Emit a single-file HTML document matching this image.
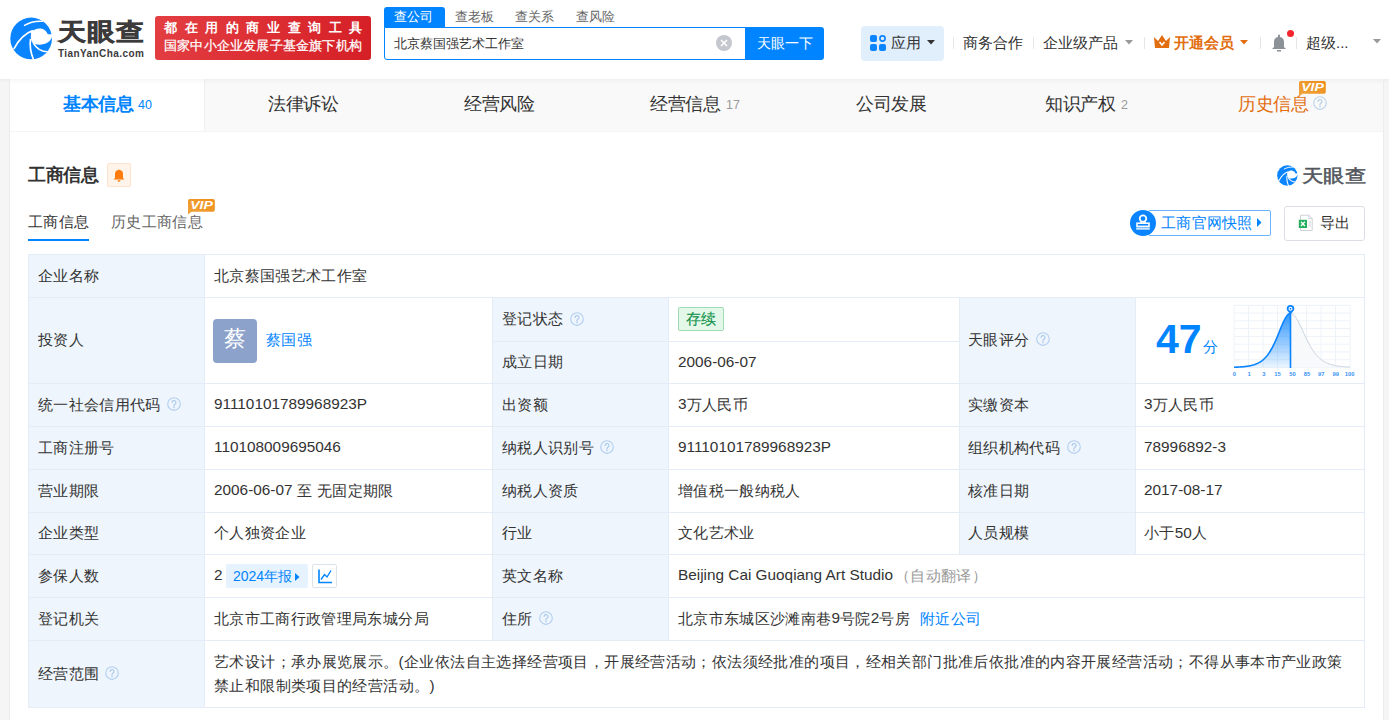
<!DOCTYPE html>
<html><head><meta charset="utf-8">
<style>
*{margin:0;padding:0;box-sizing:border-box}
:root{--lbg:#eef5fc;--bc:#e4edf7}
html,body{width:1389px;height:720px;overflow:hidden;background:#f5f5f5;font-family:"Liberation Sans",sans-serif;color:#333}
.a{position:absolute;white-space:nowrap}
.t{position:absolute;white-space:nowrap;line-height:1}
#hdr{position:absolute;left:0;top:0;width:1389px;height:79px;background:#fff;box-shadow:0 1px 4px rgba(0,0,0,.06)}
#panel{position:absolute;left:10px;top:79px;width:1373px;height:641px;background:#fff}
#nav{position:absolute;left:10px;top:79px;width:1373px;height:53px;background:#f9f9f9}
.nt{position:absolute;top:94px;white-space:nowrap;font-size:18px;letter-spacing:-0.4px;line-height:20px;color:#333}
.ns{position:absolute;top:99px;white-space:nowrap;font-size:12.5px;line-height:12px;color:#999}
.tab{position:absolute;top:0;height:53px;width:196px;font-size:18px;color:#333;text-align:center;line-height:53px}
.tab sup{font-size:13px;color:#999;vertical-align:baseline;margin-left:5px}
.sep{position:absolute;top:37px;width:1px;height:12px;background:#e6e6e6}
.q{position:absolute;width:14px;height:14px;border:1px solid #b8cfe6;border-radius:50%;color:#a8c2dc;font-size:10px;line-height:12px;text-align:center}
.hl{position:absolute;height:1px;background:#e4edf7}
.vl{position:absolute;width:1px;background:#e4edf7}
.lab{position:absolute;background:#eef5fc}
.tx{position:absolute;white-space:nowrap;font-size:15.35px;letter-spacing:0.35px;line-height:20px;color:#333}
.tx i{font-style:normal;letter-spacing:0;position:relative;top:-0.5px}
</style></head><body>
<div id="hdr">
  <!-- logo -->
  <svg class="a" style="left:8px;top:15px" width="48" height="46" viewBox="0 0 751 720">
    <circle cx="362" cy="367" r="326" fill="#0a84ff"/>
    <path d="M362 262 C440 195 570 180 622 300 L720 300 L720 350 L690 338 C660 440 560 480 425 458 C375 445 345 395 362 262 Z" fill="#fff"/>
    <path d="M90 535 C150 420 250 290 390 245" stroke="#fff" stroke-width="26" fill="none"/>
    <path d="M352 375 C335 500 360 610 402 705" stroke="#fff" stroke-width="26" fill="none"/>
    <path d="M395 440 C450 530 540 575 620 575" stroke="#fff" stroke-width="26" fill="none"/>
    <path d="M250 165 C330 120 450 90 548 100" stroke="#fff" stroke-width="22" fill="none"/>
  </svg>
  <div class="t" style="left:58px;top:16px;font-size:28px;font-weight:bold;color:#3c3a3b;letter-spacing:1px;-webkit-text-stroke:0.7px #3c3a3b;transform:scaleY(0.86);transform-origin:0 100%">天眼查</div>
  <div class="t" style="left:58px;top:48.5px;font-size:10px;font-weight:bold;color:#3c3a3b;letter-spacing:0.42px">TianYanCha.com</div>
  <!-- red banner -->
  <div class="a" style="left:155px;top:16px;width:216px;height:44px;border-radius:3px;background:linear-gradient(100deg,#e33e42,#d51f26)"></div>
  <div class="t" style="left:164px;top:21px;font-size:13px;font-weight:bold;color:#fff;letter-spacing:7.6px">都在用的商业查询工具</div>
  <div class="t" style="left:164px;top:39px;font-size:13px;color:#fff;letter-spacing:0.2px;-webkit-text-stroke:0.25px #fff">国家中小企业发展子基金旗下机构</div>
  <!-- search -->
  <div class="a" style="left:384px;top:7px;width:61px;height:20px;background:#0084ff;border-radius:3px 3px 0 0"></div>
  <div class="t" style="left:394px;top:10px;font-size:13px;color:#fff">查公司</div>
  <div class="t" style="left:455px;top:10px;font-size:13px;color:#666">查老板</div>
  <div class="t" style="left:515px;top:10px;font-size:13px;color:#666">查关系</div>
  <div class="t" style="left:576px;top:10px;font-size:13px;color:#666">查风险</div>
  <div class="a" style="left:384px;top:27px;width:362px;height:33px;border:1px solid #0084ff;border-radius:0 0 0 3px;background:#fff"></div>
  <div class="t" style="left:394px;top:37px;font-size:13px;color:#333">北京蔡国强艺术工作室</div>
  <div class="a" style="left:716px;top:35px;width:16px;height:16px;border-radius:50%;background:#c4c8ce"></div>
  <svg class="a" style="left:716px;top:35px" width="16" height="16"><path d="M5 5L11 11M11 5L5 11" stroke="#fff" stroke-width="1.6"/></svg>
  <div class="a" style="left:745px;top:27px;width:79px;height:33px;background:#0084ff;border-radius:0 3px 3px 0"></div>
  <div class="t" style="left:757px;top:36px;font-size:14px;color:#fff">天眼一下</div>
  <!-- right nav -->
  <div class="a" style="left:861px;top:26px;width:83px;height:35px;background:#e1eefc;border-radius:4px"></div>
  <svg class="a" style="left:870px;top:35px" width="16" height="16">
    <rect x="0" y="0" width="7" height="7" rx="2" fill="#0a84ff"/>
    <circle cx="12.5" cy="3.5" r="2.6" fill="none" stroke="#0a84ff" stroke-width="1.6"/>
    <rect x="0" y="9" width="7" height="7" rx="2" fill="#0a84ff"/>
    <rect x="9" y="9" width="7" height="7" rx="2" fill="#0a84ff"/>
  </svg>
  <div class="t" style="left:891px;top:35px;font-size:15px;color:#333">应用</div>
  <svg class="a" style="left:927px;top:40px" width="8" height="5"><path d="M0 0H8L4 4.5Z" fill="#333"/></svg>
  <div class="sep" style="left:953px"></div>
  <div class="t" style="left:963px;top:35px;font-size:15px;color:#333">商务合作</div>
  <div class="sep" style="left:1033px"></div>
  <div class="t" style="left:1043px;top:35px;font-size:15px;color:#333">企业级产品</div>
  <svg class="a" style="left:1125px;top:40px" width="8" height="5"><path d="M0 0H8L4 4.5Z" fill="#999"/></svg>
  <div class="sep" style="left:1144px"></div>
  <svg class="a" style="left:1154px;top:35px" width="16" height="13"><path d="M0 2 L4 6 L8 0 L12 6 L16 2 L15 13 H1 Z" fill="#e26e10"/><path d="M5.5 7 L8 10 L10.5 7" stroke="#fff" stroke-width="1.6" fill="none"/></svg>
  <div class="t" style="left:1174px;top:35px;font-size:15px;color:#e26e10;font-weight:bold">开通会员</div>
  <svg class="a" style="left:1240px;top:40px" width="8" height="5"><path d="M0 0H8L4 4.5Z" fill="#e26e10"/></svg>
  <div class="sep" style="left:1260px"></div>
  <svg class="a" style="left:1271px;top:34px" width="16" height="18"><path d="M8 0.5a1 1 0 0 1 1 1V3a5 5 0 0 1 4 5v5l2 2H1l2-2V8a5 5 0 0 1 4-5V1.5a1 1 0 0 1 1-1Z" fill="#8d9299"/><rect x="6" y="16" width="4" height="1.5" fill="#8d9299"/></svg>
  <div class="a" style="left:1287px;top:30px;width:7px;height:7px;border-radius:50%;background:#f4262d"></div>
  <div class="sep" style="left:1296px"></div>
  <div class="t" style="left:1306px;top:35px;font-size:15px;color:#333">超级...</div>
  <svg class="a" style="left:1373px;top:39px" width="8" height="5"><path d="M0 0H8L4 4.5Z" fill="#999"/></svg>
</div>

<div id="panel"></div>
<div class="a" style="left:9px;top:79px;width:1px;height:641px;background:#ebebeb"></div>
<div class="a" style="left:1383px;top:79px;width:1px;height:641px;background:#ededed"></div>
<div id="nav">
  <div class="a" style="left:0;top:0;width:195px;height:52px;background:#fff;border-right:1px solid #efefef"></div>
  <div class="a" style="left:0;top:52px;width:1373px;height:1px;background:#f4f4f4"></div>
  <div class="a" style="left:0;top:0;width:1373px;height:5px;background:linear-gradient(rgba(0,0,0,.035),rgba(0,0,0,0))"></div>
</div>
<div class="nt" style="left:63px;color:#0084ff;font-weight:bold">基本信息</div>
<div class="ns" style="left:138px;color:#0084ff">40</div>
<div class="nt" style="left:268px">法律诉讼</div>
<div class="nt" style="left:464px">经营风险</div>
<div class="nt" style="left:650px">经营信息</div>
<div class="ns" style="left:726px">17</div>
<div class="nt" style="left:856px">公司发展</div>
<div class="nt" style="left:1045px">知识产权</div>
<div class="ns" style="left:1121px">2</div>
<div class="nt" style="left:1238px;color:#e26e10">历史信息</div>
<svg class="a" style="left:1313px;top:96.3px" width="14" height="14"><circle cx="7" cy="7" r="6.3" fill="none" stroke="#bcd3ea" stroke-width="1.15"/><path d="M5.1 5.5a1.95 1.95 0 1 1 2.8 1.75c-.6.3-.9.65-.9 1.25v.55" fill="none" stroke="#b3cce6" stroke-width="1.15" stroke-linecap="round"/><circle cx="7" cy="10.5" r=".75" fill="#b3cce6"/></svg>
<svg class="a" style="left:1299px;top:81px" width="28" height="16" viewBox="0 0 28 16"><defs><linearGradient id="vg1299" x1="0" y1="1" x2="1" y2="0"><stop offset="0" stop-color="#f0a43c"/><stop offset="1" stop-color="#ee8d18"/></linearGradient></defs><path d="M1.8 0H25a1.8 1.8 0 0 1 1.8 1.8V11a1.8 1.8 0 0 1-1.8 1.8H3.6L0 15.6V1.8A1.8 1.8 0 0 1 1.8 0Z" fill="url(#vg1299)"/><text x="2.2" y="10.2" font-family="Liberation Sans" font-size="11" font-weight="bold" font-style="italic" fill="#fff" textLength="22.6" lengthAdjust="spacingAndGlyphs">VIP</text></svg>



<!-- section header -->
<div class="t" style="left:28px;top:165.5px;font-size:18px;font-weight:bold;letter-spacing:-0.5px;color:#333">工商信息</div>
<div class="a" style="left:107px;top:163px;width:24px;height:24px;background:#fff4ea;border:1px solid #fde3cc;border-radius:2px"></div>
<svg class="a" style="left:112px;top:168px" width="14" height="14"><path d="M7 1.5a1 1 0 0 1 .8.6A4 4 0 0 1 11 6v4l1.5 1.5H1.5L3 10V6a4 4 0 0 1 3.2-3.9A1 1 0 0 1 7 1.5Z" fill="#ff7b0d"/><path d="M5.5 12.3h3a1.5 1.5 0 0 1-3 0Z" fill="#ff7b0d"/></svg>
<!-- small logo right -->
<svg class="a" style="left:1276px;top:163.5px" width="23.5" height="22.5" viewBox="0 0 751 720">
  <circle cx="362" cy="367" r="326" fill="#0a84ff"/>
  <path d="M362 262 C440 195 570 180 622 300 L720 300 L720 350 L690 338 C660 440 560 480 425 458 C375 445 345 395 362 262 Z" fill="#fff"/>
  <path d="M90 535 C150 420 250 290 390 245" stroke="#fff" stroke-width="34" fill="none"/>
  <path d="M352 375 C335 500 360 610 402 705" stroke="#fff" stroke-width="34" fill="none"/>
  <path d="M395 440 C450 530 540 575 620 575" stroke="#fff" stroke-width="34" fill="none"/>
  <path d="M250 165 C330 120 450 90 548 100" stroke="#fff" stroke-width="30" fill="none"/>
</svg>
<div class="t" style="left:1302px;top:163.5px;font-size:21px;font-weight:normal;-webkit-text-stroke:0.6px #53575d;color:#53575d;letter-spacing:0.3px;transform:scaleY(0.84);transform-origin:0 100%">天眼查</div>
<!-- sub tabs -->
<div class="t" style="left:28px;top:214px;font-size:15px;letter-spacing:0.3px;color:#333">工商信息</div>
<div class="a" style="left:28px;top:239px;width:61px;height:2px;background:#0084ff"></div>
<div class="t" style="left:111px;top:214px;font-size:15px;letter-spacing:0.35px;color:#666">历史工商信息</div>
<svg class="a" style="left:188px;top:199px" width="28" height="16" viewBox="0 0 28 16"><defs><linearGradient id="vg188" x1="0" y1="1" x2="1" y2="0"><stop offset="0" stop-color="#f0a43c"/><stop offset="1" stop-color="#ee8d18"/></linearGradient></defs><path d="M1.8 0H25a1.8 1.8 0 0 1 1.8 1.8V11a1.8 1.8 0 0 1-1.8 1.8H3.6L0 15.6V1.8A1.8 1.8 0 0 1 1.8 0Z" fill="url(#vg188)"/><text x="2.2" y="10.2" font-family="Liberation Sans" font-size="11" font-weight="bold" font-style="italic" fill="#fff" textLength="22.6" lengthAdjust="spacingAndGlyphs">VIP</text></svg>
<!-- stamp button -->
<div class="a" style="left:1148px;top:210px;width:123px;height:26px;border:1px solid #6bb4ff;border-radius:2px;background:#fff"></div>
<div class="a" style="left:1130px;top:210px;width:26px;height:26px;border-radius:50%;background:#0a84ff"></div>
<svg class="a" style="left:1130px;top:210px" width="26" height="26"><circle cx="13" cy="8.6" r="3.3" fill="none" stroke="#fff" stroke-width="1.7"/><path d="M11.4 11.6V13.2M14.6 11.6V13.2" stroke="#fff" stroke-width="1.6"/><rect x="7" y="13.2" width="12" height="3.2" fill="none" stroke="#fff" stroke-width="1.6"/><rect x="6.2" y="17.6" width="13.6" height="2.1" fill="#fff" fill-opacity="0.8"/></svg>
<div class="t" style="left:1161px;top:215px;font-size:15px;letter-spacing:0.3px;color:#0084ff">工商官网快照</div>
<svg class="a" style="left:1257px;top:218px" width="5" height="9"><path d="M0 0L4.5 4.5L0 9Z" fill="#0084ff"/></svg>
<!-- export -->
<div class="a" style="left:1284px;top:206px;width:81px;height:35px;border:1px solid #dcdfe6;border-radius:3px;background:#fff"></div>
<svg class="a" style="left:1298px;top:214px" width="17" height="18"><path d="M2.5 1.2h8.3l3.4 3.4v11.9H2.5z" fill="#fff" stroke="#cdd1d8" stroke-width="1"/><path d="M10.8 1.2v3.4h3.4" fill="none" stroke="#cdd1d8" stroke-width="1"/><rect x="0.8" y="5.8" width="8.2" height="8.2" fill="#22ae5c"/><path d="M2.9 7.8l4 4.2M6.9 7.8l-4 4.2" stroke="#fff" stroke-width="1.3"/><path d="M10.6 8h2.4M10.6 10h2.4M10.6 12h2.4" stroke="#d0d3d9" stroke-width="1"/></svg>
<div class="t" style="left:1320px;top:215px;font-size:15px;color:#333">导出</div>
<!--TABLE-->
<div class="a" style="left:28px;top:254px;width:176px;height:453px;background:var(--lbg)"></div>
<div class="a" style="left:492px;top:297px;width:176px;height:343px;background:var(--lbg)"></div>
<div class="a" style="left:959px;top:297px;width:176px;height:257px;background:var(--lbg)"></div>
<div class="a" style="left:28px;top:254px;width:1337px;height:1px;background:var(--bc)"></div>
<div class="a" style="left:28px;top:297px;width:1337px;height:1px;background:var(--bc)"></div>
<div class="a" style="left:28px;top:383px;width:1337px;height:1px;background:var(--bc)"></div>
<div class="a" style="left:28px;top:426px;width:1337px;height:1px;background:var(--bc)"></div>
<div class="a" style="left:28px;top:469px;width:1337px;height:1px;background:var(--bc)"></div>
<div class="a" style="left:28px;top:512px;width:1337px;height:1px;background:var(--bc)"></div>
<div class="a" style="left:28px;top:554px;width:1337px;height:1px;background:var(--bc)"></div>
<div class="a" style="left:28px;top:597px;width:1337px;height:1px;background:var(--bc)"></div>
<div class="a" style="left:28px;top:640px;width:1337px;height:1px;background:var(--bc)"></div>
<div class="a" style="left:28px;top:707px;width:1337px;height:1px;background:var(--bc)"></div>
<div class="a" style="left:492px;top:341px;width:467px;height:1px;background:var(--bc)"></div>
<div class="a" style="left:28px;top:254px;width:1px;height:454px;background:var(--bc)"></div>
<div class="a" style="left:204px;top:254px;width:1px;height:454px;background:var(--bc)"></div>
<div class="a" style="left:492px;top:297px;width:1px;height:343px;background:var(--bc)"></div>
<div class="a" style="left:668px;top:297px;width:1px;height:343px;background:var(--bc)"></div>
<div class="a" style="left:959px;top:297px;width:1px;height:257px;background:var(--bc)"></div>
<div class="a" style="left:1135px;top:297px;width:1px;height:257px;background:var(--bc)"></div>
<div class="a" style="left:1364px;top:254px;width:1px;height:454px;background:var(--bc)"></div>
<div class="tx" style="left:38px;top:265.5px">企业名称</div>
<div class="tx" style="left:214px;top:265.5px">北京蔡国强艺术工作室</div>
<div class="tx" style="left:38px;top:330px">投资人</div>
<div class="tx" style="left:502px;top:309px">登记状态</div>
<svg class="a" style="left:569.6px;top:311.5px" width="14" height="14"><circle cx="7" cy="7" r="6.3" fill="none" stroke="#b3cff0" stroke-width="1.15"/><path d="M5.1 5.5a1.95 1.95 0 1 1 2.8 1.75c-.6.3-.9.65-.9 1.25v.55" fill="none" stroke="#a9c9ec" stroke-width="1.15" stroke-linecap="round"/><circle cx="7" cy="10.5" r=".75" fill="#a9c9ec"/></svg>
<div class="tx" style="left:502px;top:352px">成立日期</div>
<div class="tx" style="left:678px;top:352px"><i>2006-06-07</i></div>
<div class="tx" style="left:968px;top:330px">天眼评分</div>
<svg class="a" style="left:1036px;top:332.2px" width="14" height="14"><circle cx="7" cy="7" r="6.3" fill="none" stroke="#b3cff0" stroke-width="1.15"/><path d="M5.1 5.5a1.95 1.95 0 1 1 2.8 1.75c-.6.3-.9.65-.9 1.25v.55" fill="none" stroke="#a9c9ec" stroke-width="1.15" stroke-linecap="round"/><circle cx="7" cy="10.5" r=".75" fill="#a9c9ec"/></svg>
<div class="tx" style="left:38px;top:394.5px">统一社会信用代码</div>
<svg class="a" style="left:167px;top:397.2px" width="14" height="14"><circle cx="7" cy="7" r="6.3" fill="none" stroke="#b3cff0" stroke-width="1.15"/><path d="M5.1 5.5a1.95 1.95 0 1 1 2.8 1.75c-.6.3-.9.65-.9 1.25v.55" fill="none" stroke="#a9c9ec" stroke-width="1.15" stroke-linecap="round"/><circle cx="7" cy="10.5" r=".75" fill="#a9c9ec"/></svg>
<div class="tx" style="left:214px;top:394.5px"><i>91110101789968923P</i></div>
<div class="tx" style="left:502px;top:394.5px">出资额</div>
<div class="tx" style="left:678px;top:394.5px"><i>3</i>万人民币</div>
<div class="tx" style="left:968px;top:394.5px">实缴资本</div>
<div class="tx" style="left:1144px;top:394.5px"><i>3</i>万人民币</div>
<div class="tx" style="left:38px;top:437.5px">工商注册号</div>
<div class="tx" style="left:214px;top:437.5px"><i>110108009695046</i></div>
<div class="tx" style="left:502px;top:437.5px">纳税人识别号</div>
<svg class="a" style="left:600.4px;top:440.1px" width="14" height="14"><circle cx="7" cy="7" r="6.3" fill="none" stroke="#b3cff0" stroke-width="1.15"/><path d="M5.1 5.5a1.95 1.95 0 1 1 2.8 1.75c-.6.3-.9.65-.9 1.25v.55" fill="none" stroke="#a9c9ec" stroke-width="1.15" stroke-linecap="round"/><circle cx="7" cy="10.5" r=".75" fill="#a9c9ec"/></svg>
<div class="tx" style="left:678px;top:437.5px"><i>91110101789968923P</i></div>
<div class="tx" style="left:968px;top:437.5px">组织机构代码</div>
<svg class="a" style="left:1067px;top:440.2px" width="14" height="14"><circle cx="7" cy="7" r="6.3" fill="none" stroke="#b3cff0" stroke-width="1.15"/><path d="M5.1 5.5a1.95 1.95 0 1 1 2.8 1.75c-.6.3-.9.65-.9 1.25v.55" fill="none" stroke="#a9c9ec" stroke-width="1.15" stroke-linecap="round"/><circle cx="7" cy="10.5" r=".75" fill="#a9c9ec"/></svg>
<div class="tx" style="left:1144px;top:437.5px"><i>78996892-3</i></div>
<div class="tx" style="left:38px;top:480.5px">营业期限</div>
<div class="tx" style="left:214px;top:480.5px"><i>2006-06-07</i> 至 无固定期限</div>
<div class="tx" style="left:502px;top:480.5px">纳税人资质</div>
<div class="tx" style="left:678px;top:480.5px">增值税一般纳税人</div>
<div class="tx" style="left:968px;top:480.5px">核准日期</div>
<div class="tx" style="left:1144px;top:480.5px"><i>2017-08-17</i></div>
<div class="tx" style="left:38px;top:523px">企业类型</div>
<div class="tx" style="left:214px;top:523px">个人独资企业</div>
<div class="tx" style="left:502px;top:523px">行业</div>
<div class="tx" style="left:678px;top:523px">文化艺术业</div>
<div class="tx" style="left:968px;top:523px">人员规模</div>
<div class="tx" style="left:1144px;top:523px">小于<i>50</i>人</div>
<div class="tx" style="left:38px;top:565.5px">参保人数</div>
<div class="tx" style="left:214px;top:565.5px"><i>2</i></div>
<div class="tx" style="left:502px;top:565.5px">英文名称</div>
<div class="tx" style="left:678px;top:565.5px"><i>Beijing Cai Guoqiang Art Studio</i><span style="color:#999;margin-left:2px">（自动翻译）</span></div>
<div class="tx" style="left:38px;top:608.5px">登记机关</div>
<div class="tx" style="left:214px;top:608.5px">北京市工商行政管理局东城分局</div>
<div class="tx" style="left:502px;top:608.5px">住所</div>
<svg class="a" style="left:539px;top:611.2px" width="14" height="14"><circle cx="7" cy="7" r="6.3" fill="none" stroke="#b3cff0" stroke-width="1.15"/><path d="M5.1 5.5a1.95 1.95 0 1 1 2.8 1.75c-.6.3-.9.65-.9 1.25v.55" fill="none" stroke="#a9c9ec" stroke-width="1.15" stroke-linecap="round"/><circle cx="7" cy="10.5" r=".75" fill="#a9c9ec"/></svg>
<div class="tx" style="left:678px;top:608.5px">北京市东城区沙滩南巷<i>9</i>号院<i>2</i>号房<span style="color:#0084ff;margin-left:10px">附近公司</span></div>
<div class="tx" style="left:38px;top:663.5px">经营范围</div>
<svg class="a" style="left:105.1px;top:666.2px" width="14" height="14"><circle cx="7" cy="7" r="6.3" fill="none" stroke="#b3cff0" stroke-width="1.15"/><path d="M5.1 5.5a1.95 1.95 0 1 1 2.8 1.75c-.6.3-.9.65-.9 1.25v.55" fill="none" stroke="#a9c9ec" stroke-width="1.15" stroke-linecap="round"/><circle cx="7" cy="10.5" r=".75" fill="#a9c9ec"/></svg>
<div class="tx" style="left:214px;top:650px;line-height:24px;letter-spacing:0.385px">艺术设计；承办展览展示。(企业依法自主选择经营项目，开展经营活动；依法须经批准的项目，经相关部门批准后依批准的内容开展经营活动；不得从事本市产业政策<br>禁止和限制类项目的经营活动。)</div>
<div class="a" style="left:213px;top:319px;width:44px;height:44px;border-radius:4px;background:#8ca2cb"></div>
<div class="t" style="left:224px;top:328px;font-size:22px;color:#fff">蔡</div>
<div class="tx" style="left:266px;top:330px"><span style="color:#0084ff">蔡国强</span></div>
<div class="a" style="left:678px;top:307px;width:46px;height:24px;border:1px solid #9edbb2;border-radius:2px;background:#e3f8e9"></div>
<div class="tx" style="left:686px;top:309px;font-size:15px;letter-spacing:0;color:#12924a;-webkit-text-stroke:0.15px #12924a">存续</div>
<div class="a" style="left:226px;top:564px;width:82px;height:24px;border-radius:2px;background:#e6f2fe"></div>
<div class="tx" style="left:233px;top:566px;font-size:14px;letter-spacing:0;color:#0084ff"><i style="top:0">2024</i>年报</div>
<svg class="a" style="left:295px;top:573px" width="5" height="8"><path d="M0 0L4.5 4L0 8Z" fill="#0084ff"/></svg>
<div class="a" style="left:312px;top:564px;width:25px;height:24px;border:1px solid #dde3ea;border-radius:2px;background:#fff"></div>
<svg class="a" style="left:312px;top:564px" width="25" height="24"><path d="M7 5.5V18.5H20" fill="none" stroke="#0084ff" stroke-width="1.6"/><path d="M9 15.5L12.5 10.5L15 13L19 6.5" fill="none" stroke="#0084ff" stroke-width="1.4"/></svg>
<div class="t" style="left:1156px;top:319px;font-size:41px;font-weight:bold;color:#0084ff">47</div>
<div class="t" style="left:1203px;top:339px;font-size:15px;color:#0084ff">分</div>
<svg class="a" style="left:1230px;top:300px" width="130" height="80" viewBox="0 0 130 80"><defs><linearGradient id="lg" x1="0" y1="0" x2="0" y2="1"><stop offset="0" stop-color="#0a84ff" stop-opacity="0.85"/><stop offset="1" stop-color="#0a84ff" stop-opacity="0.08"/></linearGradient></defs><g stroke="#edf2f8" stroke-width="1"><line x1="4.10" y1="5.30" x2="4.10" y2="67.50"/><line x1="18.60" y1="5.30" x2="18.60" y2="67.50"/><line x1="33.10" y1="5.30" x2="33.10" y2="67.50"/><line x1="47.60" y1="5.30" x2="47.60" y2="67.50"/><line x1="62.10" y1="5.30" x2="62.10" y2="67.50"/><line x1="76.60" y1="5.30" x2="76.60" y2="67.50"/><line x1="91.10" y1="5.30" x2="91.10" y2="67.50"/><line x1="105.60" y1="5.30" x2="105.60" y2="67.50"/><line x1="120.10" y1="5.30" x2="120.10" y2="67.50"/><line x1="4.10" y1="5.30" x2="120.10" y2="5.30"/><line x1="4.10" y1="13.07" x2="120.10" y2="13.07"/><line x1="4.10" y1="20.85" x2="120.10" y2="20.85"/><line x1="4.10" y1="28.62" x2="120.10" y2="28.62"/><line x1="4.10" y1="36.40" x2="120.10" y2="36.40"/><line x1="4.10" y1="44.18" x2="120.10" y2="44.18"/><line x1="4.10" y1="51.95" x2="120.10" y2="51.95"/><line x1="4.10" y1="59.73" x2="120.10" y2="59.73"/><line x1="4.10" y1="67.50" x2="120.10" y2="67.50"/></g><polygon points="60.50,13.40 61.00,13.44 61.50,13.55 62.00,13.74 62.50,14.00 63.00,14.33 63.50,14.73 64.00,15.20 64.50,15.73 65.00,16.32 65.50,16.98 66.00,17.69 66.50,18.46 67.00,19.27 67.50,20.13 68.00,21.03 68.50,21.96 69.00,22.93 69.50,23.93 70.00,24.95 70.50,26.00 71.00,27.06 71.50,28.14 72.00,29.22 72.50,30.31 73.00,31.41 73.50,32.50 74.00,33.60 74.50,34.68 75.00,35.76 75.50,36.83 76.00,37.89 76.50,38.93 77.00,39.95 77.50,40.96 78.00,41.95 78.50,42.91 79.00,43.86 79.50,44.78 80.00,45.68 80.50,46.55 81.00,47.40 81.50,48.23 82.00,49.03 82.50,49.81 83.00,50.56 83.50,51.29 84.00,51.99 84.50,52.67 85.00,53.32 85.50,53.95 86.00,54.55 86.50,55.14 87.00,55.70 87.50,56.24 88.00,56.75 88.50,57.25 89.00,57.72 89.50,58.18 90.00,58.62 90.50,59.03 91.00,59.44 91.50,59.82 92.00,60.18 92.50,60.53 93.00,60.87 93.50,61.19 94.00,61.49 94.50,61.78 95.00,62.06 95.50,62.33 96.00,62.58 96.50,62.82 97.00,63.05 97.50,63.27 98.00,63.48 98.50,63.68 99.00,63.87 99.50,64.05 100.00,64.22 100.50,64.38 101.00,64.54 101.50,64.69 102.00,64.83 102.50,64.96 103.00,65.09 103.50,65.21 104.00,65.32 104.50,65.43 105.00,65.54 105.50,65.64 106.00,65.73 106.50,65.82 107.00,65.90 107.50,65.98 108.00,66.06 108.50,66.13 109.00,66.20 109.50,66.27 110.00,66.33 110.50,66.39 111.00,66.45 111.50,66.50 112.00,66.55 112.50,66.60 113.00,66.65 113.50,66.69 114.00,66.73 114.50,66.77 115.00,66.81 115.50,66.84 116.00,66.88 116.50,66.91 117.00,66.94 117.50,66.97 118.00,66.99 118.50,67.02 119.00,67.04 119.50,67.07 120.00,67.09 120.00,67.50 60.50,67.50" fill="#f8f9fb"/><polyline points="60.50,13.40 61.00,13.44 61.50,13.55 62.00,13.74 62.50,14.00 63.00,14.33 63.50,14.73 64.00,15.20 64.50,15.73 65.00,16.32 65.50,16.98 66.00,17.69 66.50,18.46 67.00,19.27 67.50,20.13 68.00,21.03 68.50,21.96 69.00,22.93 69.50,23.93 70.00,24.95 70.50,26.00 71.00,27.06 71.50,28.14 72.00,29.22 72.50,30.31 73.00,31.41 73.50,32.50 74.00,33.60 74.50,34.68 75.00,35.76 75.50,36.83 76.00,37.89 76.50,38.93 77.00,39.95 77.50,40.96 78.00,41.95 78.50,42.91 79.00,43.86 79.50,44.78 80.00,45.68 80.50,46.55 81.00,47.40 81.50,48.23 82.00,49.03 82.50,49.81 83.00,50.56 83.50,51.29 84.00,51.99 84.50,52.67 85.00,53.32 85.50,53.95 86.00,54.55 86.50,55.14 87.00,55.70 87.50,56.24 88.00,56.75 88.50,57.25 89.00,57.72 89.50,58.18 90.00,58.62 90.50,59.03 91.00,59.44 91.50,59.82 92.00,60.18 92.50,60.53 93.00,60.87 93.50,61.19 94.00,61.49 94.50,61.78 95.00,62.06 95.50,62.33 96.00,62.58 96.50,62.82 97.00,63.05 97.50,63.27 98.00,63.48 98.50,63.68 99.00,63.87 99.50,64.05 100.00,64.22 100.50,64.38 101.00,64.54 101.50,64.69 102.00,64.83 102.50,64.96 103.00,65.09 103.50,65.21 104.00,65.32 104.50,65.43 105.00,65.54 105.50,65.64 106.00,65.73 106.50,65.82 107.00,65.90 107.50,65.98 108.00,66.06 108.50,66.13 109.00,66.20 109.50,66.27 110.00,66.33 110.50,66.39 111.00,66.45 111.50,66.50 112.00,66.55 112.50,66.60 113.00,66.65 113.50,66.69 114.00,66.73 114.50,66.77 115.00,66.81 115.50,66.84 116.00,66.88 116.50,66.91 117.00,66.94 117.50,66.97 118.00,66.99 118.50,67.02 119.00,67.04 119.50,67.07 120.00,67.09" fill="none" stroke="#c6d2e0" stroke-width="1"/><polygon points="4.00,67.24 4.50,67.23 5.00,67.21 5.50,67.19 6.00,67.17 6.50,67.15 7.00,67.13 7.50,67.11 8.00,67.08 8.50,67.06 9.00,67.03 9.50,67.00 10.00,66.97 10.50,66.94 11.00,66.91 11.50,66.87 12.00,66.83 12.50,66.79 13.00,66.75 13.50,66.70 14.00,66.65 14.50,66.60 15.00,66.55 15.50,66.49 16.00,66.43 16.50,66.36 17.00,66.29 17.50,66.22 18.00,66.14 18.50,66.06 19.00,65.97 19.50,65.88 20.00,65.78 20.50,65.68 21.00,65.57 21.50,65.46 22.00,65.33 22.50,65.20 23.00,65.06 23.50,64.92 24.00,64.77 24.50,64.60 25.00,64.43 25.50,64.25 26.00,64.05 26.50,63.85 27.00,63.63 27.50,63.41 28.00,63.16 28.50,62.91 29.00,62.64 29.50,62.36 30.00,62.06 30.50,61.74 31.00,61.41 31.50,61.06 32.00,60.69 32.50,60.30 33.00,59.89 33.50,59.46 34.00,59.01 34.50,58.53 35.00,58.04 35.50,57.51 36.00,56.96 36.50,56.38 37.00,55.78 37.50,55.15 38.00,54.49 38.50,53.80 39.00,53.08 39.50,52.33 40.00,51.55 40.50,50.73 41.00,49.89 41.50,49.01 42.00,48.10 42.50,47.16 43.00,46.19 43.50,45.19 44.00,44.16 44.50,43.09 45.00,42.00 45.50,40.89 46.00,39.75 46.50,38.58 47.00,37.40 47.50,36.20 48.00,34.98 48.50,33.75 49.00,32.52 49.50,31.28 50.00,30.04 50.50,28.81 51.00,27.58 51.50,26.38 52.00,25.19 52.50,24.03 53.00,22.90 53.50,21.80 54.00,20.75 54.50,19.75 55.00,18.81 55.50,17.92 56.00,17.10 56.50,16.35 57.00,15.68 57.50,15.09 58.00,14.58 58.50,14.16 59.00,13.83 59.50,13.59 60.00,13.45 60.50,13.40 60.50,67.50" fill="url(#lg)"/><polyline points="4.00,67.24 4.50,67.23 5.00,67.21 5.50,67.19 6.00,67.17 6.50,67.15 7.00,67.13 7.50,67.11 8.00,67.08 8.50,67.06 9.00,67.03 9.50,67.00 10.00,66.97 10.50,66.94 11.00,66.91 11.50,66.87 12.00,66.83 12.50,66.79 13.00,66.75 13.50,66.70 14.00,66.65 14.50,66.60 15.00,66.55 15.50,66.49 16.00,66.43 16.50,66.36 17.00,66.29 17.50,66.22 18.00,66.14 18.50,66.06 19.00,65.97 19.50,65.88 20.00,65.78 20.50,65.68 21.00,65.57 21.50,65.46 22.00,65.33 22.50,65.20 23.00,65.06 23.50,64.92 24.00,64.77 24.50,64.60 25.00,64.43 25.50,64.25 26.00,64.05 26.50,63.85 27.00,63.63 27.50,63.41 28.00,63.16 28.50,62.91 29.00,62.64 29.50,62.36 30.00,62.06 30.50,61.74 31.00,61.41 31.50,61.06 32.00,60.69 32.50,60.30 33.00,59.89 33.50,59.46 34.00,59.01 34.50,58.53 35.00,58.04 35.50,57.51 36.00,56.96 36.50,56.38 37.00,55.78 37.50,55.15 38.00,54.49 38.50,53.80 39.00,53.08 39.50,52.33 40.00,51.55 40.50,50.73 41.00,49.89 41.50,49.01 42.00,48.10 42.50,47.16 43.00,46.19 43.50,45.19 44.00,44.16 44.50,43.09 45.00,42.00 45.50,40.89 46.00,39.75 46.50,38.58 47.00,37.40 47.50,36.20 48.00,34.98 48.50,33.75 49.00,32.52 49.50,31.28 50.00,30.04 50.50,28.81 51.00,27.58 51.50,26.38 52.00,25.19 52.50,24.03 53.00,22.90 53.50,21.80 54.00,20.75 54.50,19.75 55.00,18.81 55.50,17.92 56.00,17.10 56.50,16.35 57.00,15.68 57.50,15.09 58.00,14.58 58.50,14.16 59.00,13.83 59.50,13.59 60.00,13.45 60.50,13.40" fill="none" stroke="#0a84ff" stroke-width="1.6"/><line x1="60.50" y1="10.00" x2="60.50" y2="68.00" stroke="#0a84ff" stroke-width="1.6"/><path d="M56.70,8.70 a3.8,3.8 0 1 1 7.6,0 q0,2.2 -3.8,5 q-3.8,-2.8 -3.8,-5z" fill="#0a84ff"/><circle cx="60.50" cy="8.70" r="2" fill="#fff"/><circle cx="60.50" cy="8.70" r="0.9" fill="#0a84ff"/><text x="4.30" y="75.50" font-family="Liberation Sans" font-size="5.8" font-weight="bold" fill="#3a93f3" text-anchor="middle">0</text><text x="19.20" y="75.50" font-family="Liberation Sans" font-size="5.8" font-weight="bold" fill="#3a93f3" text-anchor="middle">1</text><text x="33.80" y="75.50" font-family="Liberation Sans" font-size="5.8" font-weight="bold" fill="#3a93f3" text-anchor="middle">3</text><text x="47.60" y="75.50" font-family="Liberation Sans" font-size="5.8" font-weight="bold" fill="#3a93f3" text-anchor="middle">15</text><text x="62.60" y="75.50" font-family="Liberation Sans" font-size="5.8" font-weight="bold" fill="#3a93f3" text-anchor="middle">50</text><text x="77.00" y="75.50" font-family="Liberation Sans" font-size="5.8" font-weight="bold" fill="#3a93f3" text-anchor="middle">85</text><text x="91.30" y="75.50" font-family="Liberation Sans" font-size="5.8" font-weight="bold" fill="#3a93f3" text-anchor="middle">97</text><text x="105.80" y="75.50" font-family="Liberation Sans" font-size="5.8" font-weight="bold" fill="#3a93f3" text-anchor="middle">99</text><text x="119.70" y="75.50" font-family="Liberation Sans" font-size="5.8" font-weight="bold" fill="#3a93f3" text-anchor="middle">100</text></svg>
<!--/TABLE-->
</body></html>
